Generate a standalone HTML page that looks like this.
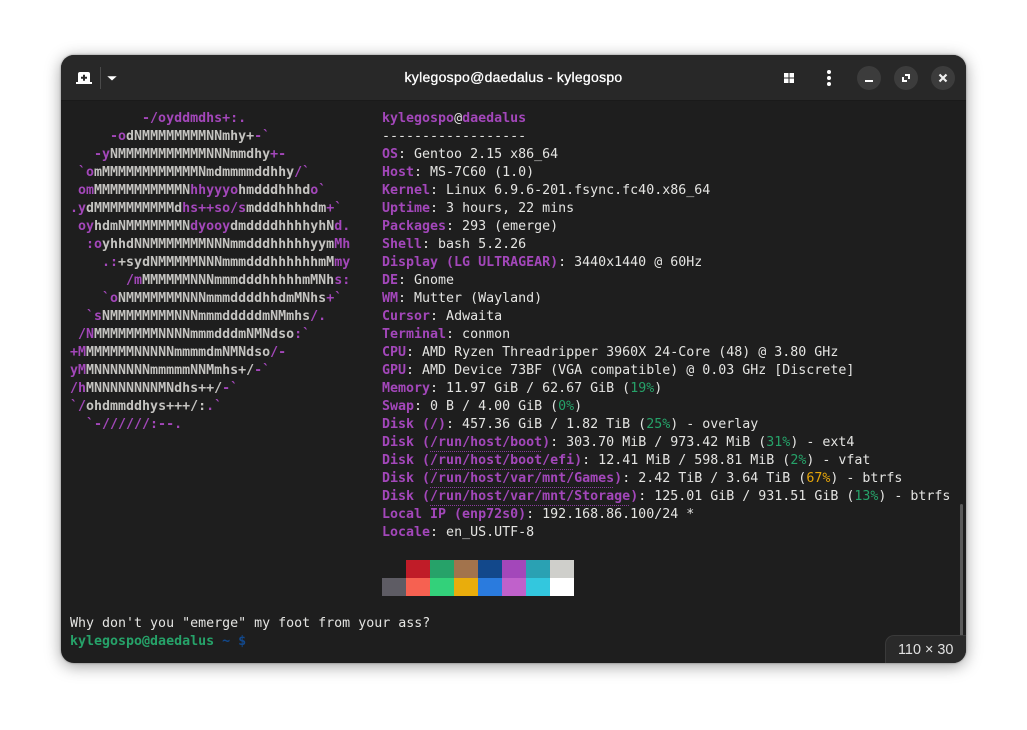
<!DOCTYPE html>
<html><head><meta charset="utf-8">
<style>
html,body{margin:0;padding:0;width:1027px;height:730px;background:#fff;overflow:hidden}
#win{position:absolute;left:61px;top:55px;width:905px;height:608px;background:#1e1e1e;border-radius:13px;box-shadow:0 3px 16px rgba(0,0,0,.38),0 0 2px rgba(0,0,0,.4);overflow:hidden}
#hd{position:absolute;left:0;top:0;width:905px;height:46px;background:#282828;border-bottom:1px solid #1a1a1a;box-sizing:border-box}
#title{position:absolute;left:0;width:905px;top:13px;text-align:center;font:14px/18px "Liberation Sans",sans-serif;color:#fff;-webkit-text-stroke:.3px #fff;letter-spacing:.28px}
.c{position:absolute;top:11px;width:24px;height:24px;border-radius:50%;background:#3c3c3c}
pre{position:absolute;margin:0;font:13.3px/18px "DejaVu Sans Mono","Liberation Mono",monospace;color:#d0cfcc;white-space:pre}
b{font-weight:bold;color:#a347ba}
pre.a{font-weight:bold;color:#c4c3c0}
pre.t{color:#e4e4e2}
u{text-decoration:none;display:inline-block;height:18px;background:linear-gradient(90deg,#8a3d9e 50%,transparent 50%) 0 100%/2px 1px repeat-x}
.g{color:#26a269}.o{color:#e5a50a}
.s{position:absolute;width:24px;height:18px}
#size{position:absolute;left:824px;top:580px;width:90px;height:40px;background:#2a2a2a;border:1px solid #3a3a3a;border-radius:9px 0 0 0;box-sizing:border-box;font:14.4px/28px "Liberation Sans",sans-serif;color:#e0e0e0;padding-left:12px}
#bar{position:absolute;left:899px;top:449px;width:3px;height:156px;background:#5a5a5a;border-radius:2px}
</style></head>
<body>
<div id="win">
<div id="hd">
<svg style="position:absolute;left:0;top:0" width="200" height="46" viewBox="0 0 200 46">
<path d="M17 27 V19 Q17 17 19 17 H27 Q29 17 29 19 V27Z" fill="#fff"/>
<rect x="15" y="27" width="16" height="2" fill="#fff"/>
<path d="M23 19.700 V25.700 M20 22.700 H26" stroke="#282828" stroke-width="2" fill="none"/>
<rect x="39" y="12" width="1" height="22" fill="#4a4a4a"/>
<path d="M46.300 21.300h9.400l-4.700 4.200z" fill="#fff"/>
</svg>
<div id="title">kylegospo@daedalus - kylegospo</div>
<svg style="position:absolute;left:700px;top:0" width="80" height="46" viewBox="0 0 80 46">
<rect x="23" y="18" width="4.500" height="4.500" fill="#fff"/><rect x="28.500" y="18" width="4.500" height="4.500" fill="#fff"/>
<rect x="23" y="23.500" width="4.500" height="4.500" fill="#fff"/><rect x="28.500" y="23.500" width="4.500" height="4.500" fill="#fff"/>
<circle cx="68" cy="17" r="2" fill="#fff"/><circle cx="68" cy="23" r="2" fill="#fff"/><circle cx="68" cy="29" r="2" fill="#fff"/>
</svg>
<div class="c" style="left:796px"></div>
<div class="c" style="left:833px"></div>
<div class="c" style="left:870px"></div>
<svg style="position:absolute;left:790px;top:0" width="115" height="46" viewBox="0 0 115 46">
<rect x="14" y="25" width="8" height="2" fill="#fff"/>
<path d="M54 20 H58 V24 M52 22 V26 H56" stroke="#fff" stroke-width="2" fill="none"/>
<path d="M88.500 19.500 L95.500 26.500 M95.500 19.500 L88.500 26.500" stroke="#f0f0f0" stroke-width="2.200" fill="none"/>
</svg>
</div>

<pre class="a" style="left:9px;top:55px"><b>         -/oyddmdhs+:.
     -o</b>dNMMMMMMMMNNmhy+<b>-`
   -y</b>NMMMMMMMMMMMNNNmmdhy<b>+-
 `o</b>mMMMMMMMMMMMMNmdmmmmddhhy<b>/`
 om</b>MMMMMMMMMMMN<b>hhyyyo</b>hmdddhhhd<b>o`
.y</b>dMMMMMMMMMMd<b>hs++so/s</b>mdddhhhhdm<b>+`
 oy</b>hdmNMMMMMMMN<b>dyooy</b>dmddddhhhhyhN<b>d.
  :o</b>yhhdNNMMMMMMMNNNmmdddhhhhhyym<b>Mh
    .:</b>+sydNMMMMMNNNmmmdddhhhhhhmM<b>my
       /m</b>MMMMMMNNNmmmdddhhhhhmMNh<b>s:
    `o</b>NMMMMMMMNNNmmmddddhhdmMNhs<b>+`
  `s</b>NMMMMMMMMNNNmmmdddddmNMmhs<b>/.
 /N</b>MMMMMMMMNNNNmmmdddmNMNdso<b>:`
+M</b>MMMMMMNNNNNmmmmdmNMNdso<b>/-
yM</b>MNNNNNNNmmmmmNNMmhs+/<b>-`
/h</b>MNNNNNNNNMNdhs++/<b>-`
`/</b>ohdmmddhys+++/:<b>.`
  `-//////:--.</b></pre>

<pre class="t" style="left:321px;top:55px"><b>kylegospo</b>@<b>daedalus</b>
------------------
<b>OS</b>: Gentoo 2.15 x86_64
<b>Host</b>: MS-7C60 (1.0)
<b>Kernel</b>: Linux 6.9.6-201.fsync.fc40.x86_64
<b>Uptime</b>: 3 hours, 22 mins
<b>Packages</b>: 293 (emerge)
<b>Shell</b>: bash 5.2.26
<b>Display (LG ULTRAGEAR)</b>: 3440x1440 @ 60Hz
<b>DE</b>: Gnome
<b>WM</b>: Mutter (Wayland)
<b>Cursor</b>: Adwaita
<b>Terminal</b>: conmon
<b>CPU</b>: AMD Ryzen Threadripper 3960X 24-Core (48) @ 3.80 GHz
<b>GPU</b>: AMD Device 73BF (VGA compatible) @ 0.03 GHz [Discrete]
<b>Memory</b>: 11.97 GiB / 62.67 GiB (<span class="g">19%</span>)
<b>Swap</b>: 0 B / 4.00 GiB (<span class="g">0%</span>)
<b>Disk (/)</b>: 457.36 GiB / 1.82 TiB (<span class="g">25%</span>) - overlay
<b>Disk (<u>/run/host/boot</u>)</b>: 303.70 MiB / 973.42 MiB (<span class="g">31%</span>) - ext4
<b>Disk (<u>/run/host/boot/efi</u>)</b>: 12.41 MiB / 598.81 MiB (<span class="g">2%</span>) - vfat
<b>Disk (<u>/run/host/var/mnt/Games</u>)</b>: 2.42 TiB / 3.64 TiB (<span class="o">67%</span>) - btrfs
<b>Disk (<u>/run/host/var/mnt/Storage</u>)</b>: 125.01 GiB / 931.51 GiB (<span class="g">13%</span>) - btrfs
<b>Local IP (enp72s0)</b>: 192.168.86.100/24 *
<b>Locale</b>: en_US.UTF-8</pre>

<div class="s" style="left:345px;top:505px;background:#c01c28"></div>
<div class="s" style="left:369px;top:505px;background:#26a269"></div>
<div class="s" style="left:393px;top:505px;background:#a2734c"></div>
<div class="s" style="left:417px;top:505px;background:#12488b"></div>
<div class="s" style="left:441px;top:505px;background:#a347ba"></div>
<div class="s" style="left:465px;top:505px;background:#2aa1b3"></div>
<div class="s" style="left:489px;top:505px;background:#cfcfcb"></div>
<div class="s" style="left:321px;top:523px;background:#5e5c64"></div>
<div class="s" style="left:345px;top:523px;background:#f66151"></div>
<div class="s" style="left:369px;top:523px;background:#33d17a"></div>
<div class="s" style="left:393px;top:523px;background:#e9ad0c"></div>
<div class="s" style="left:417px;top:523px;background:#2a7bde"></div>
<div class="s" style="left:441px;top:523px;background:#c061cb"></div>
<div class="s" style="left:465px;top:523px;background:#33c7de"></div>
<div class="s" style="left:489px;top:523px;background:#ffffff"></div>

<pre class="t" style="left:9px;top:560px">Why don't you "emerge" my foot from your ass?
<b style="color:#26a269">kylegospo@daedalus</b> <b style="color:#12488b">~ $</b></pre>

<div id="bar"></div>
<div id="size">110 × 30</div>
</div>
</body></html>
